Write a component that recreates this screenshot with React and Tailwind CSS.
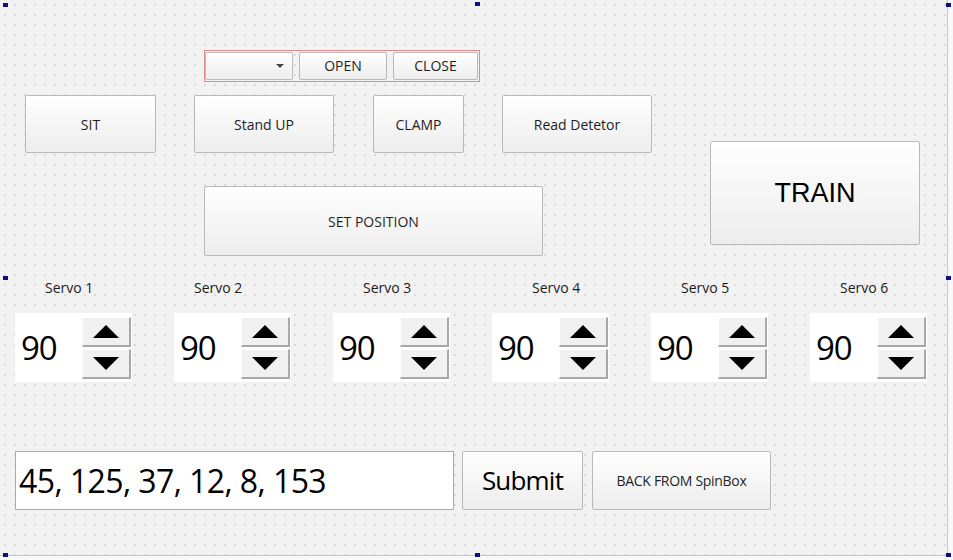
import React from "react";

const btn =
  "flex items-center justify-center border border-[#b9b9b9] rounded-[2px] bg-gradient-to-b from-[#ffffff] to-[#ededed] text-[#1f1f1f] shrink-0";

function Arrow({ up }) {
  return (
    <svg width="26" height="13" viewBox="0 0 26 13">
      {up ? <polygon points="13,0 26,13 0,13" fill="#000" /> : <polygon points="0,0 26,0 13,13" fill="#000" />}
    </svg>
  );
}

function Spin({ ml }) {
  return (
    <div className={`${ml} w-[117px] h-[69px] bg-white flex items-center shrink-0`}>
      <div className="w-[67px] pl-[6px] text-[33px] leading-none text-black tracking-[-1px]">90</div>
      <div className="flex flex-col gap-[2px]">
        <div className="w-[49px] h-[30px] bg-[#f1f1f1] border-t border-l border-t-white border-l-white border-r-[2px] border-b-[2px] border-r-[#a8a8a8] border-b-[#a8a8a8] flex items-center justify-center">
          <Arrow up />
        </div>
        <div className="w-[49px] h-[30px] bg-[#f1f1f1] border-t border-l border-t-white border-l-white border-r-[2px] border-b-[2px] border-r-[#a8a8a8] border-b-[#a8a8a8] flex items-center justify-center">
          <Arrow />
        </div>
      </div>
    </div>
  );
}

export default function App() {
  const labels = [
    ["Servo 1", "ml-[45px]"],
    ["Servo 2", "ml-[99px]"],
    ["Servo 3", "ml-[119px]"],
    ["Servo 4", "ml-[119px]"],
    ["Servo 5", "ml-[99px]"],
    ["Servo 6", "ml-[109px]"],
  ];
  const spins = ["ml-[15px]", "ml-[42px]", "ml-[42px]", "ml-[42px]", "ml-[42px]", "ml-[42px]"];
  const handle = "absolute w-[5px] h-[4px] bg-[#10107a]";
  return (
    <div
      className="relative w-[953px] h-[560px] bg-[#f8f8f8] overflow-hidden"
      style={{ fontFamily: '"Open Sans", "Noto Sans", sans-serif' }}
    >
      <div className="w-[948px] h-[556px] border-r border-b border-[#c6c6c6] bg-[#f2f2f2] bg-[radial-gradient(circle,#d2d2d2_0.6px,transparent_1px)] bg-size-[10px_10px] flex flex-col">
        {/* row 1 */}
        <div className="mt-[50px] ml-[204px] w-[276px] h-[32px] border border-[#e28a8a] flex items-center">
          <div className="ml-[0px] w-[88px] h-[28px] border border-[#bcbcbc] rounded-[2px] bg-gradient-to-b from-white to-[#eeeeee] flex items-center justify-end pr-[8px]">
            <svg width="8" height="4" viewBox="0 0 8 4">
              <polygon points="0,0 8,0 4,4" fill="#444" />
            </svg>
          </div>
          <div className={`${btn} ml-[6px] w-[88px] h-[28px] text-[14px] pb-[1px]`}>OPEN</div>
          <div className={`${btn} ml-[6px] w-[85px] h-[28px] text-[14px] pb-[1px]`}>CLOSE</div>
        </div>
        {/* row 2-3 */}
        <div className="flex mt-[13px]">
          <div className="flex flex-col">
            <div className="flex">
              <div className={`${btn} ml-[25px] w-[131px] h-[58px] text-[14px]`}>SIT</div>
              <div className={`${btn} ml-[38px] w-[140px] h-[58px] text-[14px]`}>Stand UP</div>
              <div className={`${btn} ml-[39px] w-[91px] h-[58px] text-[14px]`}>CLAMP</div>
              <div className={`${btn} ml-[38px] w-[150px] h-[58px] text-[14px]`}>Read Detetor</div>
            </div>
            <div className={`${btn} ml-[204px] mt-[33px] w-[339px] h-[70px] text-[14px]`}>SET POSITION</div>
          </div>
          <div
            className={`${btn} ml-[58px] mt-[46px] w-[210px] h-[104px] text-[27px] text-black`}
            style={{ fontFamily: '"Liberation Sans", Arial, sans-serif' }}
          >
            TRAIN
          </div>
        </div>
        {/* labels */}
        <div className="flex mt-[22px] h-[20px] items-center">
          {labels.map(([t, ml]) => (
            <div key={t} className={`${ml} w-[50px] text-[14px] leading-none text-[#1a1a1a] whitespace-nowrap`}>
              {t}
            </div>
          ))}
        </div>
        {/* spins */}
        <div className="flex mt-[15px]">
          {spins.map((ml, i) => (
            <Spin key={i} ml={ml} />
          ))}
        </div>
        {/* bottom row */}
        <div className="flex mt-[69px]">
          <div className="ml-[15px] w-[439px] h-[59px] bg-white border border-[#ababab] flex items-center pl-[3px] text-[32px] tracking-[-0.6px] text-black shrink-0">
            45, 125, 37, 12, 8, 153
          </div>
          <div className={`${btn} ml-[8px] w-[121px] h-[59px] text-[26px] text-black tracking-[-0.8px]`}>Submit</div>
          <div className={`${btn} ml-[9px] w-[179px] h-[59px] text-[14px] tracking-[-0.3px]`}>BACK FROM SpinBox</div>
        </div>
      </div>
      <div className={`${handle} left-[3px] top-[3px]`} />
      <div className={`${handle} left-[475px] top-[2px]`} />
      <div className={`${handle} left-[946px] top-[3px]`} />
      <div className={`${handle} left-[3px] top-[276px]`} />
      <div className={`${handle} left-[946px] top-[276px]`} />
      <div className={`${handle} left-[3px] top-[553px]`} />
      <div className={`${handle} left-[475px] top-[553px]`} />
      <div className={`${handle} left-[946px] top-[553px]`} />
    </div>
  );
}
